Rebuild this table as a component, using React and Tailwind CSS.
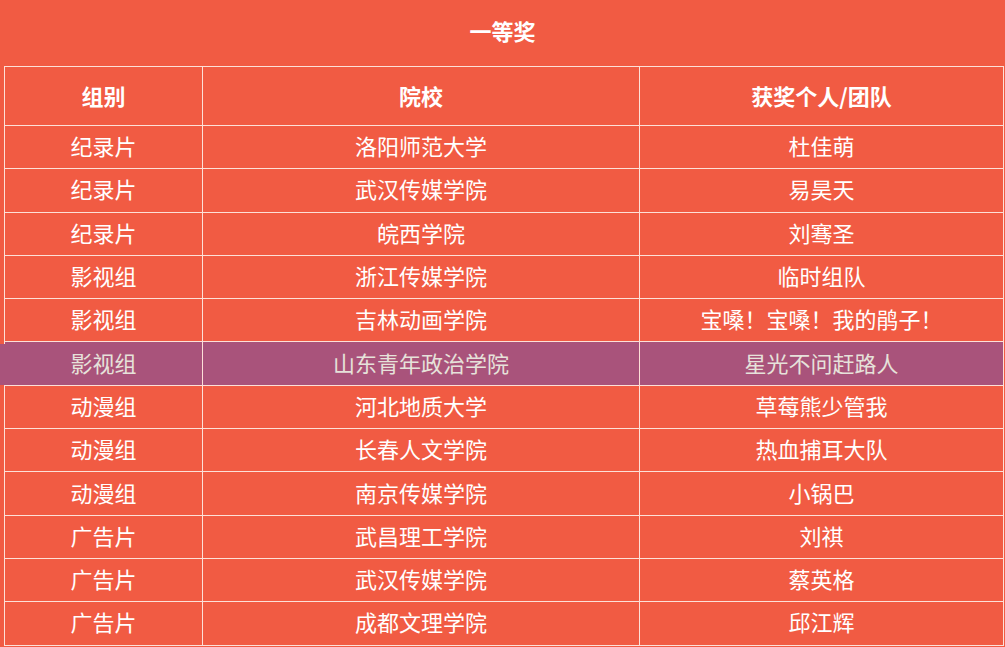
import React from "react";

const rows = [
  ["纪录片", "洛阳师范大学", "杜佳萌"],
  ["纪录片", "武汉传媒学院", "易昊天"],
  ["纪录片", "皖西学院", "刘骞圣"],
  ["影视组", "浙江传媒学院", "临时组队"],
  ["影视组", "吉林动画学院", "宝嗓！宝嗓！我的鹃子！"],
  ["影视组", "山东青年政治学院", "星光不问赶路人", true],
  ["动漫组", "河北地质大学", "草莓熊少管我"],
  ["动漫组", "长春人文学院", "热血捕耳大队"],
  ["动漫组", "南京传媒学院", "小锅巴"],
  ["广告片", "武昌理工学院", "刘祺"],
  ["广告片", "武汉传媒学院", "蔡英格"],
  ["广告片", "成都文理学院", "邱江辉"],
];

const App = () => {
  return (
    <div
      className="w-[1005px] h-[647px] overflow-hidden bg-[#f15b43] text-white relative"
      style={{ fontFamily: '"Noto Sans CJK SC", "Noto Sans", sans-serif' }}
    >
      {/* Title */}
      <div className="h-[66px] flex items-center justify-center pb-[5px]">
        <h1 className="text-[22px] font-bold">一等奖</h1>
      </div>

      {/* highlight strip left of table */}
      <div className="absolute left-0 top-[344px] w-[5px] h-[41px] bg-[#a9537b]" />

      <table className="ml-[4px] w-[999px] border-collapse table-fixed text-[22px]">
        <colgroup>
          <col className="w-[198px]" />
          <col className="w-[437px]" />
          <col className="w-[364px]" />
        </colgroup>
        <thead>
          <tr className="h-[59px]">
            <th className="border border-[#fde0d8] font-bold pb-[2px]">组别</th>
            <th className="border border-[#fde0d8] font-bold pb-[2px]">院校</th>
            <th className="border border-[#fde0d8] font-bold pb-[2px]">获奖个人/团队</th>
          </tr>
        </thead>
        <tbody>
          {rows.map((r, i) => (
            <tr
              key={i}
              className={
                r[3]
                  ? "h-[43.3px] bg-[#a9537b] text-[#e6e2da]"
                  : "h-[43.3px]"
              }
            >
              <td className="border border-[#fde0d8] text-center leading-none pb-[4px]">{r[0]}</td>
              <td className="border border-[#fde0d8] text-center leading-none pb-[4px]">{r[1]}</td>
              <td className="border border-[#fde0d8] text-center leading-none pb-[4px]">{r[2]}</td>
            </tr>
          ))}
        </tbody>
      </table>
    </div>
  );
};

export default App;
